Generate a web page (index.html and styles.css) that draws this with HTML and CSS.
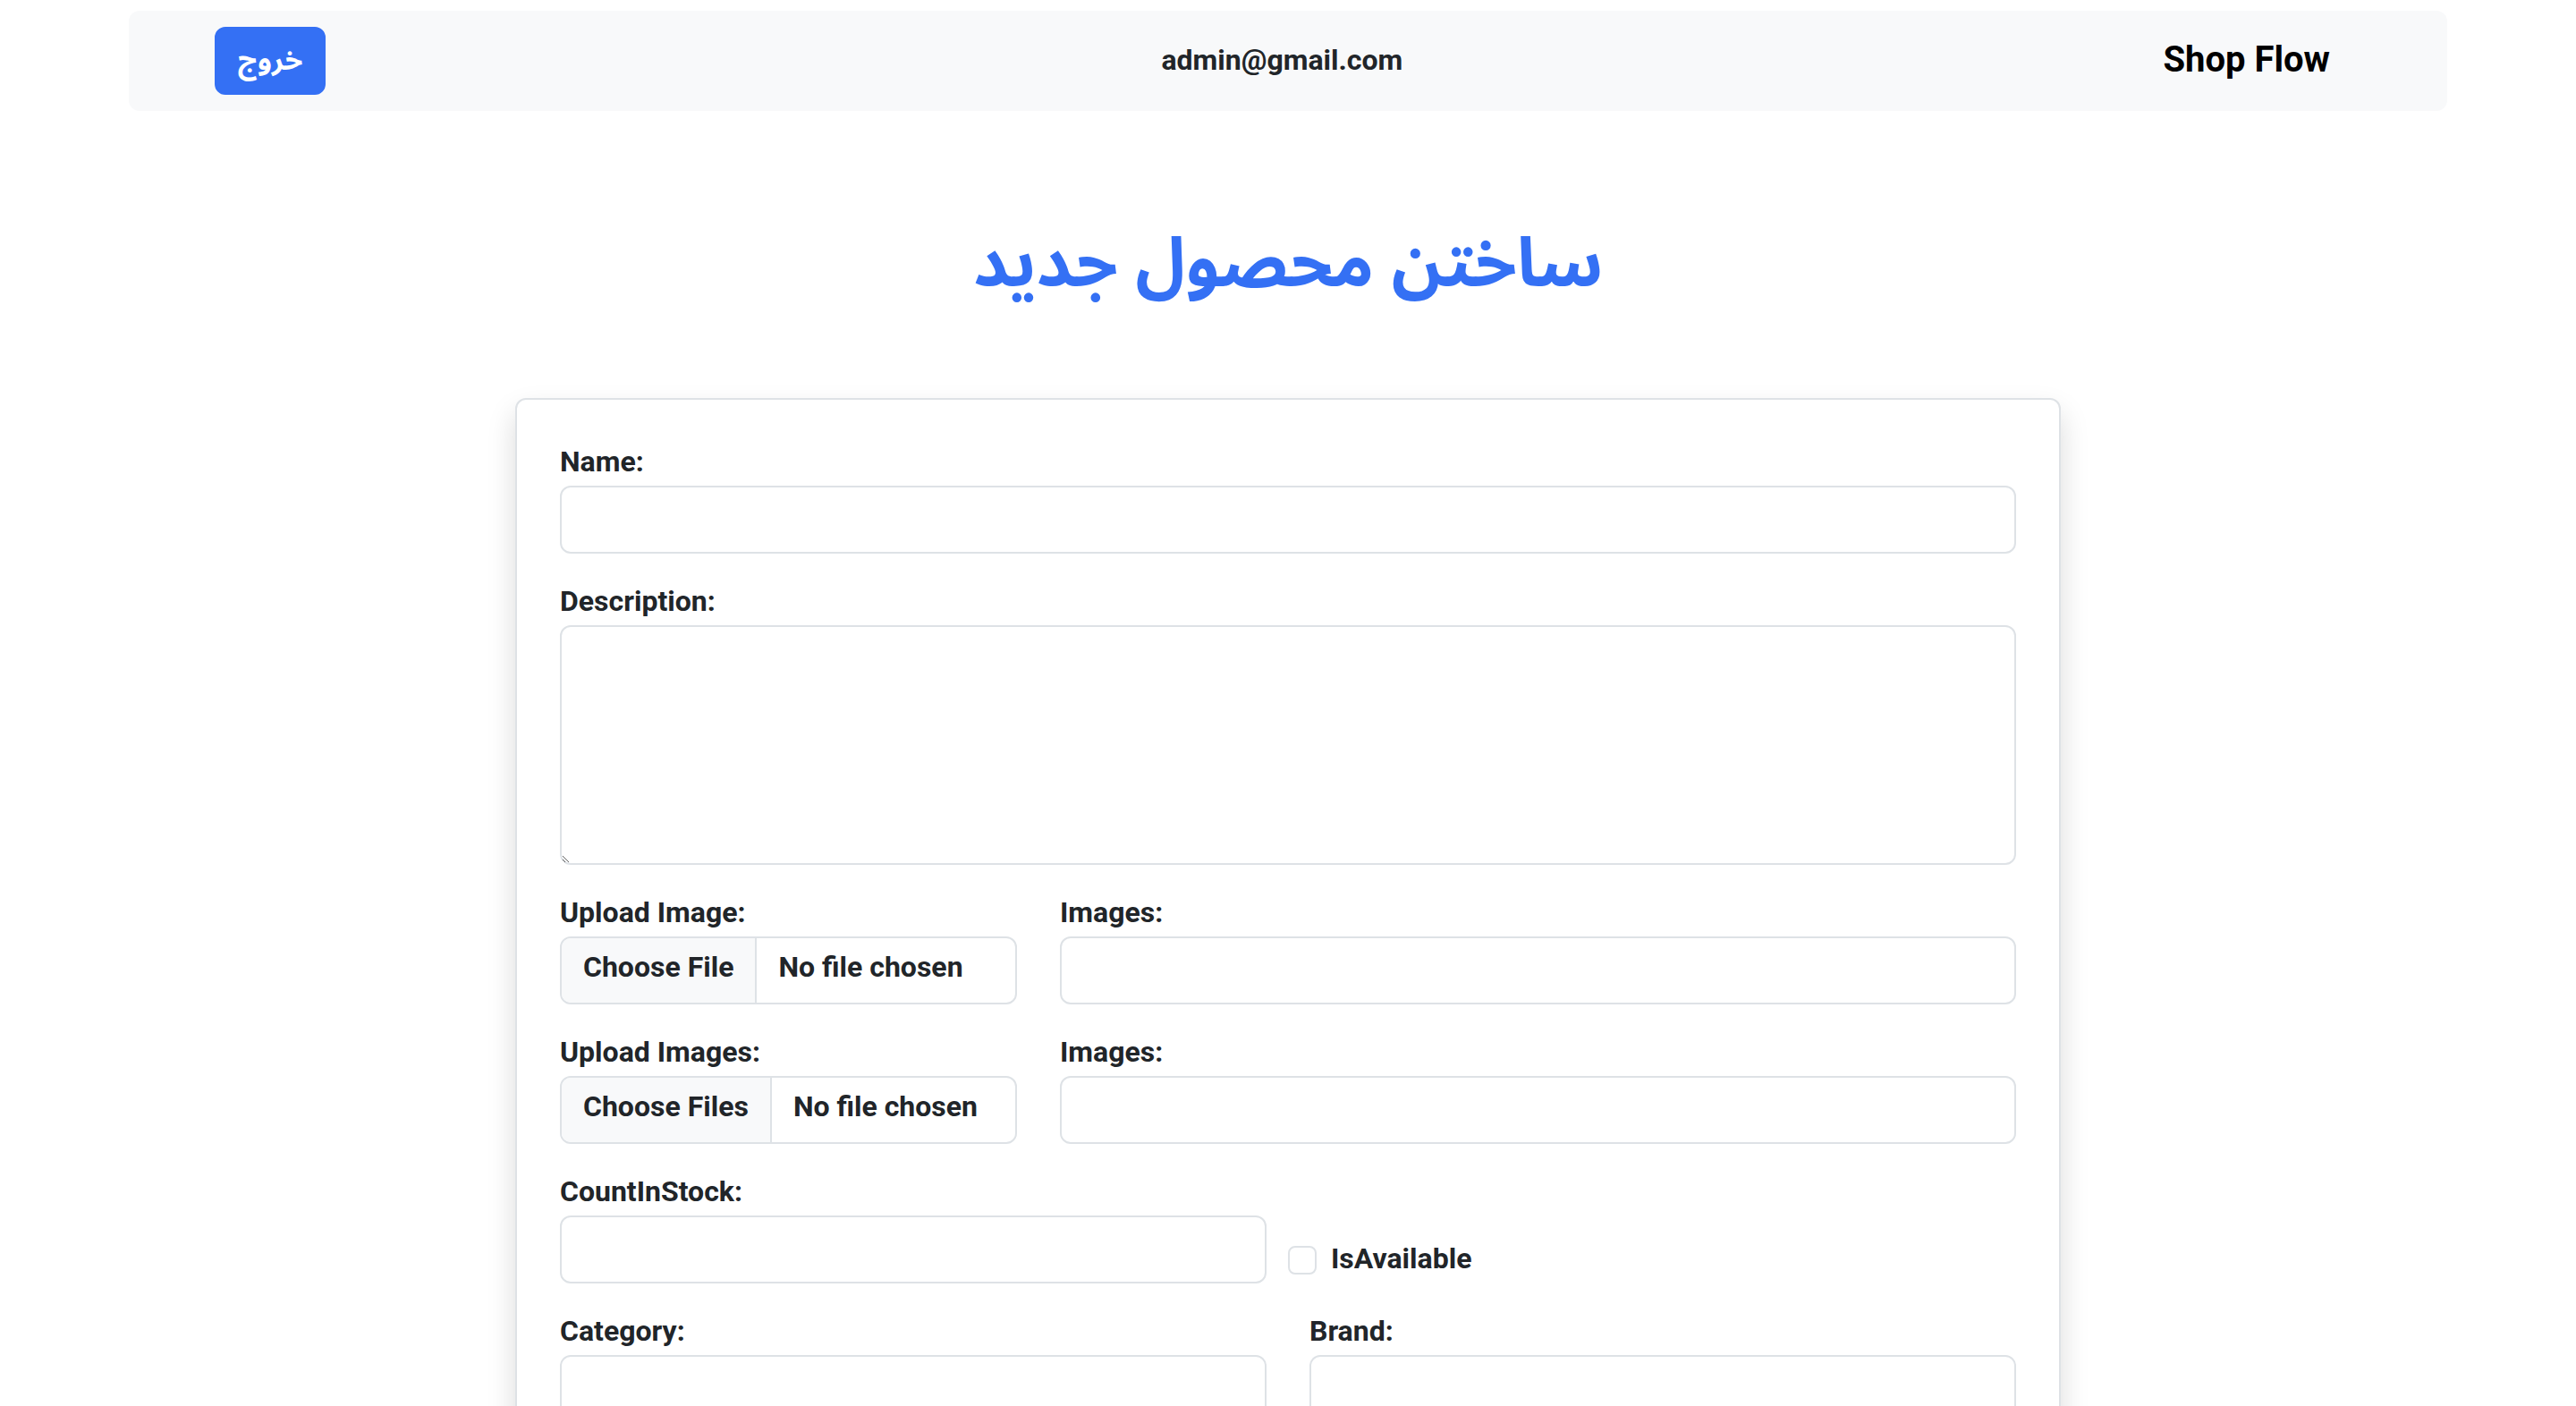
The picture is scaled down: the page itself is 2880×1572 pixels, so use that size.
FILE: index.html
```html
<!DOCTYPE html>
<html lang="fa">
<head>
<meta charset="utf-8">
<title>Shop Flow</title>
<link rel="stylesheet" href="styles.css">
</head>
<body>
<header class="page-header">
  <nav class="navbar">
    <button class="btn-exit" type="button" dir="rtl">خروج</button>
    <span class="user-email">admin@gmail.com</span>
    <a class="brand" href="#">Shop Flow</a>
  </nav>
</header>
<main class="main">
  <h1 class="title" dir="rtl">ساختن محصول جدید</h1>
  <form class="card">
    <div class="field">
      <label class="field-label" for="name">Name:</label>
      <input class="input" id="name" type="text">
    </div>
    <div class="field">
      <label class="field-label" for="desc">Description:</label>
      <textarea class="input textarea" id="desc" rows="5" dir="rtl"></textarea>
    </div>
    <div class="row">
      <div class="field col-4">
        <label class="field-label" for="img">Upload Image:</label>
        <input class="input file-input" id="img" type="file">
      </div>
      <div class="field col-8">
        <label class="field-label" for="imgs1">Images:</label>
        <input class="input" id="imgs1" type="text">
      </div>
    </div>
    <div class="row">
      <div class="field col-4">
        <label class="field-label" for="imgs">Upload Images:</label>
        <input class="input file-input" id="imgs" type="file" multiple>
      </div>
      <div class="field col-8">
        <label class="field-label" for="imgs2">Images:</label>
        <input class="input" id="imgs2" type="text">
      </div>
    </div>
    <div class="row row-stock">
      <div class="field col-6">
        <label class="field-label" for="count">CountInStock:</label>
        <input class="input" id="count" type="text">
      </div>
      <div class="check">
        <input class="check-box" id="avail" type="checkbox">
        <label class="check-label" for="avail">IsAvailable</label>
      </div>
    </div>
    <div class="row">
      <div class="field col-6">
        <label class="field-label" for="cat">Category:</label>
        <input class="input" id="cat" type="text">
      </div>
      <div class="field col-rest">
        <label class="field-label" for="brand">Brand:</label>
        <input class="input" id="brand" type="text">
      </div>
    </div>
  </form>
</main>
</body>
</html>
```
FILE: styles.css
```css
* { box-sizing: border-box; }
html, body { margin: 0; background: #fff; }
body {
  font-family: Roboto, "DejaVu Sans", sans-serif;
  font-size: 32px;
  line-height: 1.5;
  color: #212529;
}
.page-header { padding: 12px 144px 0; }
.navbar {
  display: flex;
  align-items: center;
  height: 112px;
  padding: 0 131px 3px 96px;
  background: #f8f9fa;
  border-radius: 12px;
}
.btn-exit {
  height: 76px;
  margin-top: 3px;
  padding: 12px 24px;
  font-family: "Noto Sans Arabic", "Noto Kufi Arabic", "Noto Naskh Arabic", "DejaVu Sans", sans-serif;
  font-size: 32px;
  line-height: 48px;
  font-weight: 700;
  color: #fff;
  background: #3470f4;
  border: 2px solid #3470f4;
  border-radius: 12px;
}
.user-email {
  margin-left: 934px;
  font-weight: 700;
  color: #212529;
}
.brand {
  margin-left: auto;
  font-size: 40px;
  font-weight: 700;
  color: #000;
  text-decoration: none;
}
.main {
  display: flex;
  flex-direction: column;
  align-items: center;
}
.title {
  margin: 124px 0 101px;
  font-family: "Noto Sans Arabic", "Noto Kufi Arabic", "Noto Naskh Arabic", "DejaVu Sans", sans-serif;
  font-size: 76px;
  line-height: 96px;
  font-weight: 700;
  color: #3470f4;
}
.card {
  width: 1728px;
  padding: 48px;
  border: 2px solid #dee2e6;
  border-radius: 12px;
  box-shadow: 0 16px 32px rgba(0, 0, 0, 0.15);
  background: #fff;
}
.field { margin-bottom: 32px; }
.field-label {
  display: block;
  font-weight: 700;
  line-height: 42px;
  padding-bottom: 6px;
}
.input {
  display: block;
  width: 100%;
  height: 76px;
  padding: 12px 24px;
  font-family: inherit;
  font-size: 32px;
  line-height: 48px;
  color: #212529;
  background: #fff;
  border: 2px solid #dee2e6;
  border-radius: 12px;
  outline: none;
}
.textarea { height: 268px; resize: vertical; }
.file-input {
  overflow: hidden;
  padding: 6px 24px 18px;
  font-weight: 700;
}
.file-input::file-selector-button {
  height: 76px;
  margin: -6px 24px -18px -24px;
  padding: 6px 24px 18px;
  font: inherit;
  color: #212529;
  background: #f8f9fa;
  border: 0;
  border-right: 2px solid #dee2e6;
  border-radius: 0;
}
.row { display: flex; gap: 48px; }
.col-4 { flex: none; width: 511px; }
.col-8 { flex: 1; }
.col-6 { flex: none; width: 790px; }
.col-rest { flex: 1; }
.row-stock { align-items: flex-end; gap: 24px; }
.check {
  display: flex;
  align-items: flex-start;
  margin-bottom: 36px;
  line-height: 48px;
}
.check-box {
  appearance: none;
  width: 32px;
  height: 32px;
  margin: 10px 16px 0 0;
  border: 2px solid #dee2e6;
  border-radius: 8px;
  background: #fff;
}
.check-label { font-weight: 700; }
```
